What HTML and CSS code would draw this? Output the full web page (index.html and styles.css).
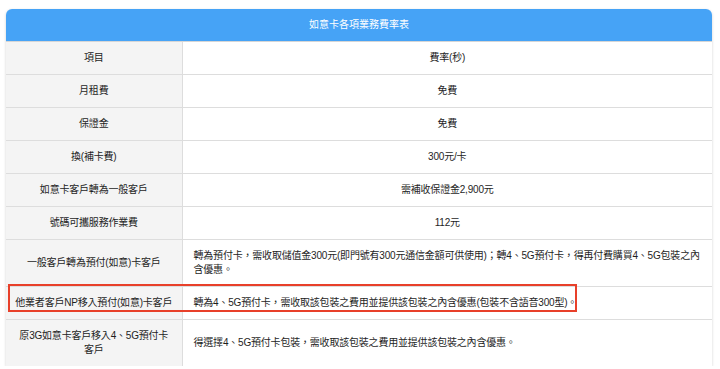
FILE: index.html
```html
<!DOCTYPE html>
<html lang="zh-Hant">
<head>
<meta charset="utf-8">
<link rel="stylesheet" href="styles.css">
</head>
<body>
<div class="wrap">
  <table class="rates">
    <colgroup>
      <col class="col-label">
      <col class="col-val">
    </colgroup>
    <thead>
      <tr><th colspan="2" class="title">如意卡各項業務費率表</th></tr>
    </thead>
    <tbody>
      <tr><td class="label">項目</td><td class="val center">費率(秒)</td></tr>
      <tr><td class="label">月租費</td><td class="val center">免費</td></tr>
      <tr><td class="label">保證金</td><td class="val center">免費</td></tr>
      <tr><td class="label">換(補卡費)</td><td class="val center">300元/卡</td></tr>
      <tr><td class="label">如意卡客戶轉為一般客戶</td><td class="val center">需補收保證金2,900元</td></tr>
      <tr><td class="label">號碼可攜服務作業費</td><td class="val center">112元</td></tr>
      <tr><td class="label">一般客戶轉為預付(如意)卡客戶</td><td class="val">轉為預付卡，需收取儲值金300元(即門號有300元通信金額可供使用)；轉4、5G預付卡，得再付費購買4、5G包裝之內含優惠。</td></tr>
      <tr><td class="label">他業者客戶NP移入預付(如意)卡客戶</td><td class="val">轉為4、5G預付卡，需收取該包裝之費用並提供該包裝之內含優惠(包裝不含語音300型)。</td></tr>
      <tr><td class="label">原3G如意卡客戶移入4、5G預付卡<br>客戶</td><td class="val">得選擇4、5G預付卡包裝，需收取該包裝之費用並提供該包裝之內含優惠。</td></tr>
    </tbody>
  </table>
  <div class="highlight"></div>
</div>
</body>
</html>
```
FILE: styles.css
```css
html, body {
  margin: 0;
  padding: 0;
  background: #ffffff;
}
body {
  font-family: "Liberation Sans", "Noto Sans CJK TC", sans-serif;
  font-size: 10px;
  color: #1e1e1e;
}
.wrap {
  position: relative;
  width: 706px;
  margin: 9px 0 0 6px;
  border-radius: 6px 6px 0 0;
  box-shadow: 0 1px 3px rgba(0, 0, 0, 0.18);
  overflow: hidden;
}
.rates {
  width: 100%;
  border-collapse: collapse;
  table-layout: fixed;
}
.col-label {
  width: 176px;
}
.col-val {
  width: 530px;
}
.title {
  background: #46a3f6;
  color: #ffffff;
  font-weight: normal;
  height: 32px;
  padding: 0;
  text-align: center;
  line-height: 14px;
  border-bottom: 1px solid #d6d6d6;
}
.rates td {
  border-bottom: 1px solid #dddddd;
  line-height: 14px;
  padding: 9px 8px 9px 11px;
  vertical-align: middle;
  letter-spacing: -0.2px;
}
.rates tr:last-child td {
  border-bottom: none;
}
.rates td.label {
  background: #f4f4f4;
  text-align: center;
  border-right: 1px solid #dddddd;
  padding-left: 4px;
  padding-right: 4px;
}
.val {
  background: #ffffff;
  text-align: left;
}
.rates td.center {
  text-align: center;
  padding-left: 8px;
  padding-right: 8px;
}
.highlight {
  position: absolute;
  left: 2px;
  top: 275px;
  width: 565px;
  height: 24px;
  border: 2px solid #e8402a;
  pointer-events: none;
}
```
